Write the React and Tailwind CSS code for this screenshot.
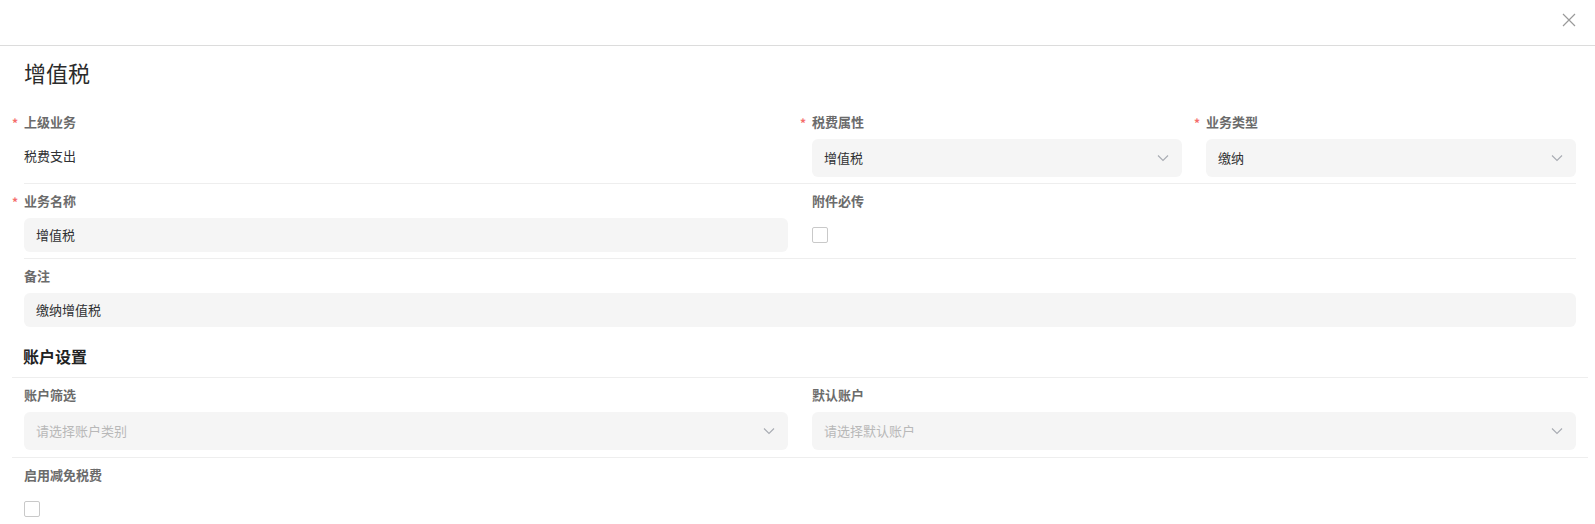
import React from "react";

const font = { fontFamily: '"Noto Sans CJK SC", "Noto Sans", sans-serif' };

const Chevron = () => (
  <svg width="12" height="8" viewBox="0 0 12 8" fill="none" className="shrink-0">
    <path d="M1 1.5L6 6.5L11 1.5" stroke="#a8abb2" strokeWidth="1.1" />
  </svg>
);

const Label = ({ children, required }) => (
  <div className="relative h-[18px] leading-[18px] text-[13px] font-bold text-[#6b6b6b] mb-2">
    {required && (
      <span className="absolute left-[-12px] top-[1px] text-[12px] text-[#f56c6c]">*</span>
    )}
    {children}
  </div>
);

const Select = ({ value, placeholder }) => (
  <div className="h-[38px] rounded-md bg-[#f5f5f5] flex items-center justify-between pl-3 pr-[13px] text-[13px]">
    {value ? (
      <span className="text-[#303133]">{value}</span>
    ) : (
      <span className="text-[#b8b8b8]">{placeholder}</span>
    )}
    <Chevron />
  </div>
);

const Input = ({ value }) => (
  <div className="h-[34px] rounded-md bg-[#f5f5f5] flex items-center px-3 text-[13px] text-[#303133]">
    {value}
  </div>
);

const Checkbox = () => (
  <div className="h-[34px] flex items-center">
    <div className="w-4 h-4 rounded-[2px] border border-[#c9c9c9] bg-white" />
  </div>
);

export default function App() {
  return (
    <div className="w-[1595px] h-[524px] bg-white overflow-hidden" style={font}>
      <div className="h-[46px] border-b border-[#dcdcdc] flex justify-end items-start pr-[19px] pt-[13px]">
        <svg width="14" height="14" viewBox="0 0 14 14" fill="none">
          <path d="M1 1L13 13M13 1L1 13" stroke="#9a9a9a" strokeWidth="1.2" />
        </svg>
      </div>

      <div className="pl-6 pr-[19px]">
        <h1 className="pt-[11px] leading-[30px] text-[22px] font-normal text-[#2b2b2b] mb-[18px]">
          增值税
        </h1>

        <div className="grid grid-cols-4 gap-x-6 pt-2 pb-[6px] border-b border-[#eeeeee]">
          <div className="col-span-2">
            <Label required>上级业务</Label>
            <div className="h-[38px] flex items-center pb-1 text-[13px] text-[#303133]">税费支出</div>
          </div>
          <div>
            <Label required>税费属性</Label>
            <Select value="增值税" />
          </div>
          <div>
            <Label required>业务类型</Label>
            <Select value="缴纳" />
          </div>
        </div>

        <div className="grid grid-cols-4 gap-x-6 pt-2 pb-[6px] border-b border-[#eeeeee]">
          <div className="col-span-2">
            <Label required>业务名称</Label>
            <Input value="增值税" />
          </div>
          <div className="col-span-2">
            <Label>附件必传</Label>
            <Checkbox />
          </div>
        </div>

        <div className="pt-2">
          <Label>备注</Label>
          <Input value="缴纳增值税" />
        </div>

        <h2 className="mt-[17px] mb-[9px] leading-6 text-[16px] font-bold text-[#222] -ml-px">
          账户设置
        </h2>

        <div className="-mx-3 border-t border-[#eeeeee]">
          <div className="px-3 grid grid-cols-2 gap-x-6 pt-2 pb-[7px] border-b border-[#eeeeee]">
            <div>
              <Label>账户筛选</Label>
              <Select placeholder="请选择账户类别" />
            </div>
            <div>
              <Label>默认账户</Label>
              <Select placeholder="请选择默认账户" />
            </div>
          </div>
          <div className="px-3 pt-2">
            <Label>启用减免税费</Label>
            <Checkbox />
          </div>
        </div>
      </div>
    </div>
  );
}
